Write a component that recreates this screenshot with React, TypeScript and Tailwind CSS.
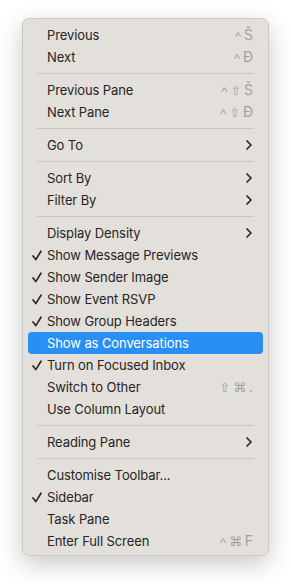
type Item =
  | { sep: true }
  | { label: string; check?: boolean; keys?: string[]; sub?: boolean; active?: boolean };

const items: Item[] = [
  { label: "Previous", keys: ["^", "Š"] },
  { label: "Next", keys: ["^", "Đ"] },
  { sep: true },
  { label: "Previous Pane", keys: ["^", "⇧", "Š"] },
  { label: "Next Pane", keys: ["^", "⇧", "Đ"] },
  { sep: true },
  { label: "Go To", sub: true },
  { sep: true },
  { label: "Sort By", sub: true },
  { label: "Filter By", sub: true },
  { sep: true },
  { label: "Display Density", sub: true },
  { label: "Show Message Previews", check: true },
  { label: "Show Sender Image", check: true },
  { label: "Show Event RSVP", check: true },
  { label: "Show Group Headers", check: true },
  { label: "Show as Conversations", active: true },
  { label: "Turn on Focused Inbox", check: true },
  { label: "Switch to Other", keys: ["⇧", "⌘", "."] },
  { label: "Use Column Layout" },
  { sep: true },
  { label: "Reading Pane", sub: true },
  { sep: true },
  { label: "Customise Toolbar..." },
  { label: "Sidebar", check: true },
  { label: "Task Pane" },
  { label: "Enter Full Screen", keys: ["^", "⌘", "F"] },
];

function Check({ light }: { light?: boolean }) {
  return (
    <svg width="10" height="11" viewBox="0 0 10 11" className="absolute left-[4px] top-[6px]">
      <path d="M1 6 L3.8 9.6 L9 1.2" fill="none" stroke={light ? "#fff" : "#2b2a28"} strokeWidth="1.7" strokeLinecap="round" strokeLinejoin="round" />
    </svg>
  );
}

function Chevron() {
  return (
    <svg width="6" height="10" viewBox="0 0 6 10" className="mr-[1px]">
      <path d="M1 1 L5 5 L1 9" fill="none" stroke="#2b2a28" strokeWidth="1.7" strokeLinecap="round" strokeLinejoin="round" />
    </svg>
  );
}

function Key({ k }: { k: string }) {
  if (k === "^") return <span className="text-[13px] font-['Liberation_Sans',sans-serif] translate-y-[1px]">^</span>;
  if (k === "⇧" || k === "⌘") return <span className="text-[13px] font-['DejaVu_Sans',sans-serif]">{k}</span>;
  return <span className="text-[14px] font-['Inter',sans-serif]">{k}</span>;
}

export default function App() {
  return (
    <div className="w-[291px] h-[584px] bg-white pt-[18px] pl-[22px] font-['Inter','Noto_Sans',sans-serif]">
      <div className="w-[247px] rounded-[7px] border border-[#cbc8c5] bg-[#e3e0dc] pt-[5px] pb-[3px] px-[5px] shadow-[0_8px_24px_rgba(0,0,0,0.22)]">
        {items.map((it, i) =>
          "sep" in it ? (
            <div key={i} className="h-[11px] flex items-center px-[9px]">
              <div className="h-px w-full bg-[#c9c6c2]" />
            </div>
          ) : (
            <div
              key={i}
              className={`relative h-[22px] flex items-center pl-[19px] pr-[10px] rounded-[4px] text-[13px] tracking-[-0.1px] ${
                it.active ? "bg-[#2a8ff3] text-white" : "text-[#262523]"
              }`}
            >
              {it.check && <Check light={it.active} />}
              <span className="flex-1 leading-none">{it.label}</span>
              {it.keys && (
                <span className="flex items-center gap-[3px] text-[#a3a09d] leading-none">
                  {it.keys.map((k, j) => (
                    <Key key={j} k={k} />
                  ))}
                </span>
              )}
              {it.sub && <Chevron />}
            </div>
          )
        )}
      </div>
    </div>
  );
}
